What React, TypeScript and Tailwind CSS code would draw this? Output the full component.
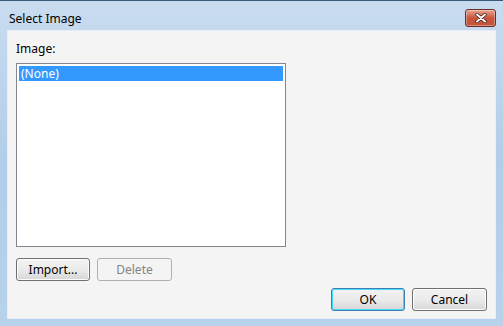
import React from "react";

export default function App() {
  const font = { fontFamily: '"Noto Sans", "Open Sans", sans-serif' };
  return (
    <div
      className="w-[503px] h-[326px] overflow-hidden flex flex-col border-t border-[#3c5a7c] bg-gradient-to-b from-[#c9dcf0] via-[#b2cde9] to-[#b8d2ec]"
      style={font}
    >
      {/* Title bar */}
      <div className="h-[29px] flex items-start justify-between pl-[9px] pr-[7px]">
        <span className="text-[12px] text-black leading-[16px] mt-[10px]">Select Image</span>
        <div className="w-[31px] h-[18px] mt-[8px] rounded-[3px] border border-[#6d2c22] bg-gradient-to-b from-[#e8a492] via-[#c9543c] to-[#c4533b] flex items-center justify-center shadow-[inset_0_0_0_1px_rgba(255,255,255,0.35)]">
          <svg width="12" height="10" viewBox="0 0 12 10">
            <path d="M2 1.5 L10 8.5 M10 1.5 L2 8.5" stroke="#3a1a14" strokeWidth="3.4" strokeLinecap="round" />
            <path d="M2 1.5 L10 8.5 M10 1.5 L2 8.5" stroke="#ffffff" strokeWidth="2" strokeLinecap="round" />
          </svg>
        </div>
      </div>
      {/* Body */}
      <div className="flex-1 mx-[7px] mb-[7px] border border-[#e6eef8] bg-[#f4f4f4] flex flex-col pl-[8px] pr-[8px]">
        <div className="text-[12px] text-black mt-[10px] leading-[16px]">Image:</div>
        <div className="mt-[6px] w-[270px] h-[184px] border border-[#828790] bg-white p-[2px]">
          <div className="h-[15px] bg-[#3399ff] text-white text-[12px] leading-[15px] pl-[2px]">(None)</div>
        </div>
        <div className="flex gap-[7px] mt-[11px]">
          <button className="w-[74px] h-[23px] rounded-[3px] border border-[#707070] bg-gradient-to-b from-[#f2f2f2] via-[#ebebeb] to-[#d6d6d6] text-[12px] text-black shadow-[inset_0_0_0_1px_#fcfcfc]">
            Import...
          </button>
          <button className="w-[75px] h-[23px] rounded-[3px] border border-[#adb2b5] bg-[#f4f4f4] text-[12px] text-[#838383]">
            Delete
          </button>
        </div>
        <div className="flex justify-end gap-[7px] mt-[7px] pr-[0px]">
          <button className="w-[74px] h-[23px] rounded-[3px] border border-[#3c7fb1] bg-gradient-to-b from-[#f2f2f2] via-[#ebebeb] to-[#d6d6d6] text-[12px] text-black shadow-[inset_0_0_0_1px_#48d8fb]">
            OK
          </button>
          <button className="w-[75px] h-[23px] rounded-[3px] border border-[#707070] bg-gradient-to-b from-[#f2f2f2] via-[#ebebeb] to-[#d6d6d6] text-[12px] text-black shadow-[inset_0_0_0_1px_#fcfcfc]">
            Cancel
          </button>
        </div>
      </div>
    </div>
  );
}
